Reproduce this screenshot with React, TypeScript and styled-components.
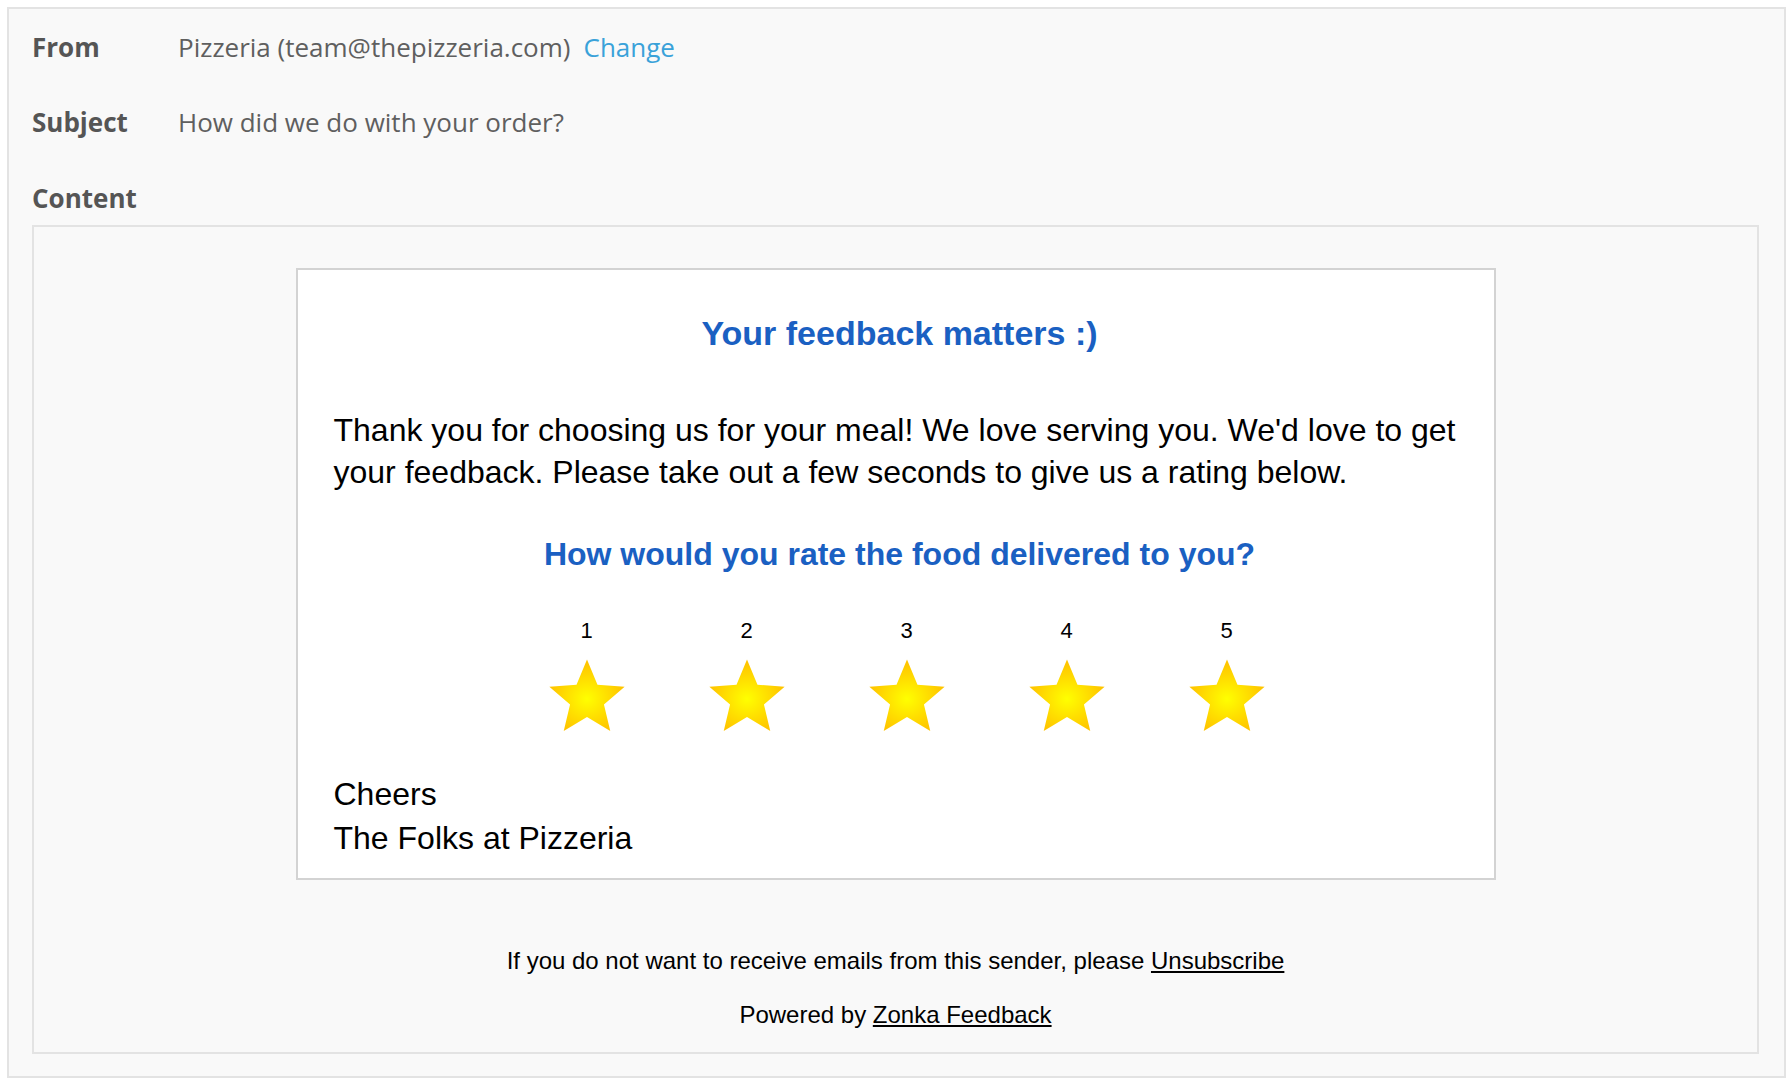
import React, { useId } from "react";
import styled, { createGlobalStyle } from "styled-components";

const GlobalStyle = createGlobalStyle`
  html, body {
    margin: 0;
    padding: 0;
    background: #ffffff;
  }
  * {
    box-sizing: border-box;
  }
`;

const COLORS = {
  LABEL: "#555555",
  VALUE: "#5f5f5f",
  LINK: "#3aa2d9",
  PANEL_BG: "#f9f9f9",
  PANEL_BORDER: "#e3e3e3",
  CARD_BORDER: "#d3d3d3",
  BLUE: "#1a60c2",
  TEXT: "#000000",
};

const RATINGS = [1, 2, 3, 4, 5];

const StarIcon = () => {
  const id = useId();
  return (
    <svg width="76" height="73" viewBox="2 0 96 91">
      <defs>
        <radialGradient id={id} cx="50%" cy="55%" r="50%">
          <stop offset="0%" stopColor="#ffff00" />
          <stop offset="100%" stopColor="#ffc400" />
        </radialGradient>
      </defs>
      <polygon
        fill={`url(#${id})`}
        points="50,0 63.23,31.8 97.55,34.55 71.4,56.95 79.39,90.45 50,72.5 20.61,90.45 28.6,56.95 2.45,34.55 36.77,31.8"
      />
    </svg>
  );
};

export default function App() {
  return (
    <>
      <GlobalStyle />
      <Wrapper>
        <FieldRow>
          <Label>From</Label>
          <Value>
            Pizzeria (team@thepizzeria.com)
            <ChangeLink href="#">Change</ChangeLink>
          </Value>
        </FieldRow>
        <FieldRow>
          <Label>Subject</Label>
          <Value>How did we do with your order?</Value>
        </FieldRow>
        <ContentLabel>Content</ContentLabel>
        <ContentPanel>
          <EmailCard>
            <Title>Your feedback matters :)</Title>
            <Paragraph>
              Thank you for choosing us for your meal! We love serving you. We'd love to get
              your feedback. Please take out a few seconds to give us a rating below.
            </Paragraph>
            <Question>How would you rate the food delivered to you?</Question>
            <RatingRow>
              {RATINGS.map((n) => (
                <RatingCell key={n}>
                  <RatingNumber>{n}</RatingNumber>
                  <StarIcon />
                </RatingCell>
              ))}
            </RatingRow>
            <SignOff>
              Cheers
              <br />
              The Folks at Pizzeria
            </SignOff>
          </EmailCard>
          <Footer>
            <FooterLine>
              If you do not want to receive emails from this sender, please{" "}
              <FooterLink href="#">Unsubscribe</FooterLink>
            </FooterLine>
            <FooterLine>
              Powered by <FooterLink href="#">Zonka Feedback</FooterLink>
            </FooterLine>
          </Footer>
        </ContentPanel>
      </Wrapper>
    </>
  );
}

const Wrapper = styled.div`
  margin: 7px 0 0 7px;
  width: 1779px;
  height: 1071px;
  background: ${COLORS.PANEL_BG};
  border: 2px solid ${COLORS.PANEL_BORDER};
  padding: 0 25px 0 23px;
  font-family: "Open Sans", "Noto Sans", sans-serif;
`;

const FieldRow = styled.div`
  display: flex;
  align-items: center;
  height: 75px;
`;

const Label = styled.div`
  width: 146px;
  flex-shrink: 0;
  font-size: 26px;
  font-weight: 700;
  color: ${COLORS.LABEL};
`;

const Value = styled.div`
  font-size: 26px;
  color: ${COLORS.VALUE};
  display: flex;
  align-items: center;
  gap: 13px;
`;

const ChangeLink = styled.a`
  color: ${COLORS.LINK};
  text-decoration: none;
`;

const ContentLabel = styled(Label)`
  padding-top: 21px;
  line-height: 36px;
  margin-bottom: 9px;
`;

const ContentPanel = styled.div`
  border: 2px solid ${COLORS.PANEL_BORDER};
  background: ${COLORS.PANEL_BG};
  height: 829px;
  padding: 41px 0 0;
  display: flex;
  flex-direction: column;
  align-items: center;
  font-family: "Liberation Sans", Arial, sans-serif;
  color: ${COLORS.TEXT};
`;

const EmailCard = styled.div`
  width: 1200px;
  height: 612px;
  background: #ffffff;
  border: 2px solid ${COLORS.CARD_BORDER};
  padding: 45px 28px 0 36px;
`;

const Title = styled.h1`
  margin: 0;
  text-align: center;
  font-size: 34px;
  line-height: 36px;
  font-weight: 700;
  color: ${COLORS.BLUE};
`;

const Paragraph = styled.p`
  margin: 58px 0 0;
  font-size: 32px;
  line-height: 42px;
`;

const Question = styled.h2`
  margin: 43px 0 0;
  text-align: center;
  font-size: 32px;
  line-height: 36px;
  font-weight: 700;
  color: ${COLORS.BLUE};
`;

const RatingRow = styled.div`
  display: flex;
  justify-content: center;
  margin-top: 47px;
  padding-left: 14px;
`;

const RatingCell = styled.div`
  width: 160px;
  display: flex;
  flex-direction: column;
  align-items: center;
  gap: 16px;
`;

const RatingNumber = styled.span`
  font-size: 22px;
  line-height: 24px;
`;

const SignOff = styled.p`
  margin: 40px 0 0;
  font-size: 32px;
  line-height: 44px;
`;

const Footer = styled.div`
  margin-top: 66px;
  display: flex;
  flex-direction: column;
  align-items: center;
  gap: 24px;
`;

const FooterLine = styled.div`
  font-size: 24px;
  line-height: 30px;
`;

const FooterLink = styled.a`
  color: ${COLORS.TEXT};
  text-decoration: underline;
`;
